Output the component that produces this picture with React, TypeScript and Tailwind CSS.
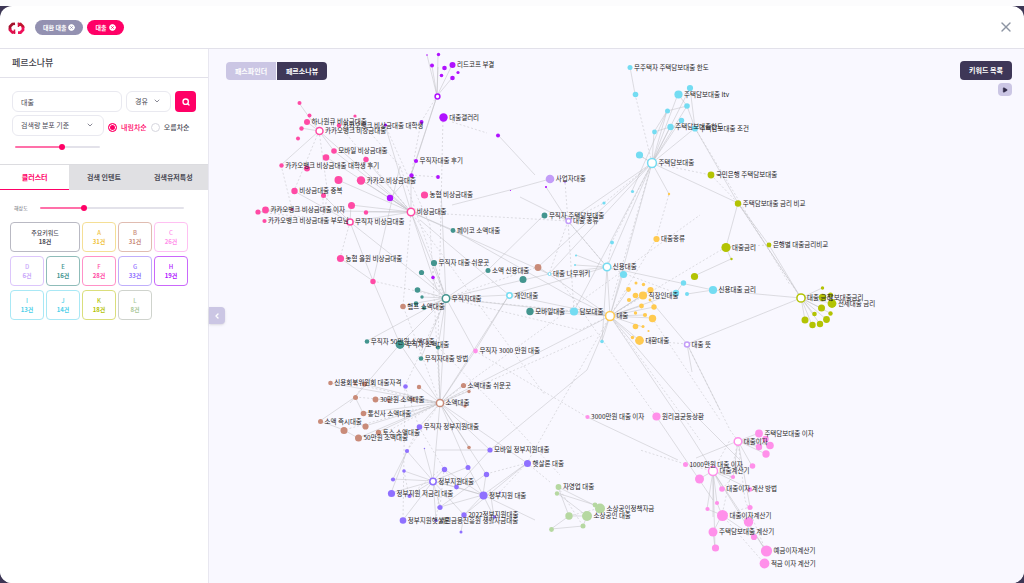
import { useState } from "react";
import { ChevronDown, ChevronLeft, CircleX, Play, Search, X } from "lucide-react";

type GraphNode = [x: number, y: number, r: number, label?: string, hub?: boolean];

interface Cluster {
  id: string;
  color: string;
  nodes: GraphNode[];
}

const clusters: Cluster[] = [
  {
    id: "F",
    color: "#ff4aa5",
    nodes: [
      [299.5, 103, 2], [309.5, 115.5, 2], [307, 122, 3, "하나원큐 비상금대출"],
      [339, 125.5, 2.2, "카카오뱅크 비상금대출 대학생"], [355, 116, 1.6], [301.5, 128.5, 2.2],
      [319.5, 131, 4, "카카오뱅크 비상금대출", true], [298, 138.5, 2], [334, 151, 2.8, "모바일 비상금대출"],
      [326, 157.5, 3.3], [366, 159.5, 2.7], [281.5, 165.5, 2.2, "카카오뱅크 비상금대출 대학생 후기"],
      [307, 168.5, 3], [338.5, 180, 4], [361, 180.5, 4.2, "카카오 비상금대출"],
      [294.5, 191, 3.2, "비상금대출 중복"], [323.5, 195.5, 2.5], [424.5, 195, 3.6, "농협 비상금대출"],
      [351.5, 205.5, 3.5], [265.5, 210, 3.4, "카카오뱅크 비상금대출 이자"], [258, 212, 2.6],
      [292, 209.5, 1.4], [366, 212.5, 2.2], [264.5, 221, 2.1, "카카오뱅크 비상금대출 부모님"],
      [350, 222, 3.6, "무직자 비상금대출", true], [411, 212, 4.2, "비상금대출", true],
      [340.5, 258.5, 3.6, "농협 올원 비상금대출"], [373, 281.5, 2.7],
    ],
  },
  {
    id: "H",
    color: "#b012ff",
    nodes: [
      [427, 55, 0.8], [438.5, 54.5, 1.7], [432, 65.5, 2], [444.5, 68, 2.3], [452.5, 65, 3, "리드코프 부결"],
      [458, 72.5, 1.6], [441.5, 75.5, 1.8], [452.5, 78, 2.3], [437.5, 96.5, 2.9, "", true],
      [443.5, 117.5, 4.2, "대출갤러리"], [421.5, 122, 2], [385.5, 125, 1.6], [498, 135.5, 2],
      [416, 161, 2.1, "무직자대출 후기"], [411.5, 175.5, 2.2], [438, 177, 1.9], [390, 198, 3.2],
      [433, 277.5, 1.8], [546, 187, 1.1], [510.5, 190.5, 0.6],
    ],
  },
  {
    id: "D",
    color: "#c39df8",
    nodes: [
      [550, 179, 4.3, "사업자대출"], [565, 182, 1.2], [568.5, 221, 3, "대출 종류", true],
      [687, 344.5, 3, "대출 뜻", true],
    ],
  },
  {
    id: "E",
    color: "#43958f",
    nodes: [
      [544.5, 215.5, 2.9, "무직자 주택담보대출"], [453, 230.5, 2.4, "페이코 소액대출"],
      [434, 263, 3.1, "무직자 대출 쉬운곳"], [421.5, 272.5, 2.6], [417.5, 290, 2.8], [422, 297, 1.7],
      [446, 298.5, 4.2, "무직자대출", true], [416, 303.5, 2.3], [424, 308, 2.1], [488, 270.5, 2.5, "소액 신용대출"],
      [523, 279.5, 3.5], [530, 311.5, 3.7, "모바일대출"], [367, 341.5, 2.3, "무직자 50만원 소액대출"],
      [400, 344.5, 4.4, "무직자 소액대출"], [438, 347.5, 2.1], [421, 358.5, 2.3, "무직자대출 방법"],
    ],
  },
  {
    id: "B",
    color: "#c98b79",
    nodes: [
      [403, 306.5, 2.8, "햄프 소액대출"], [538, 267.5, 3.4], [330.5, 383, 2.3, "신용회복위원회 대출자격"],
      [355, 384, 1.5], [364.5, 384, 2.5], [419, 387, 2.2], [463.5, 385.5, 2.6, "소액대출 쉬운곳"],
      [469, 391.5, 1.7], [440, 403, 4.1, "소액대출", true], [465, 406, 1.7], [355.5, 397.5, 2.5],
      [375.5, 399.5, 2.9, "30만원 소액대출"], [389, 400.5, 2.1], [413, 399.5, 2.1], [363.5, 413.5, 2.8, "통신사 소액대출"],
      [320.5, 421.5, 2.5, "소액 즉시대출"], [365.5, 426.5, 3.1], [344, 430.5, 3.5], [378.5, 432.5, 2.7, "토스 소액대출"],
      [358.5, 438, 3.5, "50만원 소액대출"], [469, 447.5, 1.8],
    ],
  },
  {
    id: "G",
    color: "#8f70ff",
    nodes: [
      [405.5, 386.5, 2.3], [419.5, 427, 2.8, "무직자 정부지원대출"], [407, 451, 2.1], [424.5, 448.5, 0.7],
      [490, 450, 2.6, "모바일 정부지원대출"], [527.5, 463.5, 3.5, "햇살론 대출"], [404, 471, 1.8], [444.5, 469.5, 2.7],
      [468, 467.5, 2.5], [486.5, 474.5, 2.7], [393, 479.5, 2.1], [433, 481.5, 3.7, "정부지원대출", true],
      [456.5, 487, 2.4], [391.5, 493.5, 3.6, "정부지원 저금리 대출"], [409.5, 496, 2.1],
      [483.5, 495.5, 4, "정부지원 대출"], [500, 492.5, 1], [494.5, 517, 1.7], [440, 507.5, 2.6],
      [464, 515, 2.7, "2022정부지원대출"], [403, 520.5, 3.3, "정부지원햇살론"],
      [436, 520.5, 1.6, "서민금융진흥원 생활자금대출"], [461, 532, 1.5],
    ],
  },
  {
    id: "I",
    color: "#74dcf2",
    nodes: [
      [630, 67.5, 2.5, "무주택자 주택담보대출 한도"], [635.5, 94.5, 2.8], [678.5, 94.5, 4.1, "주택담보대출 ltv"],
      [690, 88, 3.1], [687, 106, 2.8], [667.5, 111, 2.5], [681.5, 120.5, 2.7], [670.5, 127, 3.2, "주택담보대출한도"],
      [695, 128.5, 3.1, "주택담보대출 조건"], [654.5, 132, 2.4], [639.5, 155, 3.6], [652, 163, 4.9, "주택담보대출", true],
      [632.5, 191.5, 1.6], [604, 203, 1.6], [612, 242.5, 1.9], [576, 255.5, 1], [575, 265, 1],
      [607, 267, 4.3, "신용대출", true], [549.5, 274, 2, "대출 나무위키", true], [509.5, 295.5, 3.2, "개인대출", true],
      [574, 311.5, 4.1, "담보대출"], [623.5, 274.5, 3.6], [602, 341.5, 1.8], [683.5, 283, 2.7], [676, 293, 3.2],
      [687, 294, 2], [713, 290, 4.1, "신용대출 금리"],
    ],
  },
  {
    id: "A",
    color: "#ffca50",
    nodes: [
      [669, 194, 1.2], [656.5, 239, 3.1, "대출종류"], [636, 283, 1.5], [643.5, 284.5, 1.7], [628.5, 289.5, 2.4],
      [650.5, 290, 3.1], [635.5, 295.5, 2.8], [643, 295.5, 4.1, "직장인대출"], [629, 300, 2.1], [650, 300, 1.4],
      [641.5, 306, 2.4], [654, 307, 2.7], [635.5, 313, 1.7], [645, 315, 2.1], [652.5, 318.5, 3.7], [635.5, 326.5, 2.8],
      [643, 326.5, 1.5], [648.5, 331, 1.1], [632.5, 337.5, 1.7], [639.5, 340.5, 4.4, "대환대출"],
      [610, 316, 4.9, "대출", true],
    ],
  },
  {
    id: "K",
    color: "#b3c303",
    nodes: [
      [711, 175, 3.4, "국민은행 주택담보대출"], [738, 203.5, 3.2, "주택담보대출 금리 비교"], [726, 247.5, 4.6, "대출금리"],
      [769, 245, 2.4, "은행별 대출금리비교"], [731.5, 259, 1.2], [694.5, 276.5, 3.6], [801, 298, 4.6, "대출 금리", true],
      [822.5, 288, 1.7], [822.5, 297.5, 3.7, "담보대출금리"], [830.5, 295, 2.5], [832, 303.5, 4.4, "전세대출 금리"],
      [821.5, 308, 3.5], [814.5, 314, 2.3], [830.5, 313.5, 2.2], [805, 320, 3.5], [812.5, 325, 3.2], [820, 324, 3.2],
      [826.5, 319.5, 3.4],
    ],
  },
  {
    id: "C",
    color: "#ff90ea",
    nodes: [
      [475.5, 351, 2.4, "무직자 3000 만원 대출"], [587.5, 417, 2.1, "3000만원 대출 이자"], [656.5, 416.5, 4.1, "원리금균등상환"],
      [685.5, 464.5, 2.5, "1000만원 대출 이자"], [738, 441.5, 4.3, "대출이자", true], [759, 433.5, 3.9, "주택담보대출 이자"],
      [765.5, 439, 3.2], [770, 445.5, 3.8], [759, 447, 3.2], [766, 454, 3.7], [752.5, 466, 2.8], [733, 477, 2.1],
      [713, 471, 5, "대출계산기", true], [699.5, 479, 4.5], [722, 489, 2.8, "대출이자 계산 방법"], [750, 489.5, 2.3],
      [717, 503, 2.1], [707.5, 509, 2.1], [722.5, 515.5, 5.5, "대출이자계산기"], [750, 507.5, 2.6], [748.5, 522, 4.7],
      [713, 532, 4.5, "주택담보대출 계산기"], [754, 537, 3.1], [715.5, 548, 3.6], [766.5, 551, 5.6, "예금이자계산기"],
      [764.5, 563.5, 4.9, "적금 이자 계산기"],
    ],
  },
  {
    id: "L",
    color: "#b6d8a1",
    nodes: [
      [558.5, 487, 2.9, "자영업 대출"], [557, 493.5, 2.2], [569, 516, 3.7], [587, 516, 5, "소상공인 대출"],
      [595, 505, 2.4], [600, 508.5, 5, "소상공인정책자금"], [583, 526, 2.5], [551.5, 529.5, 2.4],
    ],
  },
];

const solidEdges = [
  // 대출갤러리
  "M437 96L432 66M437 96L427 55M437 96L438 55M437 96L438 67M437 96L452 78M437 96L452 65",
  "M437 96L416 161L411 175M437 96L411 175L390 198M498 135L535 175",
  // 비상금대출
  "M411 212L366 160M411 212L334 151M411 212L326 157M411 212L361 180M411 212L338 180M411 212L351 205",
  "M411 212L366 212M411 212L350 222M411 212L319 131M411 212L265 210M411 212L390 198M411 212L411 175",
  "M411 212L385 125M411 212L453 230M411 212L446 298M411 212L437 290M411 212L549 274",
  "M319 131L299 103M319 131L307 122M319 131L301 128M319 131L334 151M319 131L281 165",
  "M350 222L323 195M350 222L294 191M350 222L351 205M340 258L373 281L400 166M373 281L400 344",
  "M350 222L446 298M350 222L373 281M258 212L292 209",
  // 무직자대출
  "M446 298L434 263M446 298L421 272M446 298L417 290M446 298L422 297M446 298L416 303M446 298L424 308",
  "M446 298L488 270L544 215M446 298L509 295M446 298L523 280L549 274M446 298L610 316M446 298L438 347",
  "M446 298L400 344M446 298L421 358M446 298L440 403M446 298L367 341M446 298L475 351M441 190L446 298",
  "M453 230L568 295L610 316M400 344L350 403M400 344L440 403M438 347L440 403M475 351L440 403",
  // 대출
  "M610 316L574 311M610 316L530 311M610 316L549 274M610 316L607 267M610 316L623 274M610 316L602 341",
  "M610 316L628 290M610 316L643 295M610 316L650 290M610 316L654 307M610 316L652 318M610 316L643 327",
  "M610 316L639 340M610 316L632 337M610 316L645 315M610 316L641 306M610 316L676 293M610 316L440 403",
  "M610 316L587 370L490 450M610 316L687 430L713 471M610 316L690 410L740 460M610 316L652 163",
  "M602 341L607 267M610 316L509 295L420 220M607 267L549 274M607 267L652 163M607 267L713 290L801 298",
  "M607 267L568 221L520 197M607 267L509 295L440 403M607 267L575 265M607 267L576 255",
  "M568 221L652 163M568 221L546 187M549 274L538 267L652 163M549 274L652 163M574 311L652 163",
  "M452 205L510 190L550 179",
  // 주택담보대출
  "M652 163L690 88M652 163L678 94M652 163L687 106M652 163L667 111M652 163L681 120M652 163L670 127",
  "M652 163L695 128M652 163L654 132M652 163L639 155M654 132L670 127L695 128L687 106L678 94M654 132L667 111L687 106",
  "M630 67L635 94M690 88L695 128L738 203L801 298M652 163L669 194M652 163L738 203M667 111L632 191",
  "M738 203L769 245L801 298M738 203L726 247L731 259L694 276M676 293L683 283M687 294L713 290",
  "M801 298L687 344M687 344L650 300M687 344L692 372M687 344L720 410",
  "M801 298L822 288M801 298L830 295M801 298L832 303M801 298L821 308M801 298L814 314M801 298L830 313",
  "M801 298L805 320M801 298L812 325M801 298L820 324M801 298L826 319",
  // 소액대출
  "M440 403L330 383M440 403L364 384M440 403L375 399M440 403L363 413M440 403L365 426M440 403L378 432",
  "M440 403L358 438M440 403L463 385M440 403L469 391M440 403L465 406M440 403L419 387M440 403L419 427",
  "M440 403L469 447M440 403L490 450M440 403L527 463M440 403L433 481M440 403L468 467M440 403L486 474",
  "M355 397L320 421L344 430L358 438M355 397L363 413M436 450L490 450M509 295L475 351",
  // 정부지원대출
  "M433 481L444 469M433 481L468 467M433 481L407 451M433 481L404 471M433 481L393 479M433 481L391 493",
  "M433 481L409 496M433 481L403 520M433 481L440 507M433 481L456 487M433 481L483 495M433 481L464 515",
  "M433 481L436 520M433 481L424 448M483 495L486 474M483 495L468 467M483 495L527 463M483 495L500 492",
  "M483 495L464 515M483 495L494 517M483 495L456 487L490 450M444 469L483 495L535 520M464 515L527 463",
  "M440 507L483 495M461 532L464 515M407 451L391 493M407 451L393 479M440 507L486 474M494 517L490 490",
  // 대출이자
  "M738 441L759 433M738 441L765 439M738 441L770 445M738 441L759 447M738 441L766 454M738 441L752 466",
  "M738 441L733 477M738 441L750 507M738 441L696 458M656 416L713 500M587 417L678 460",
  "M713 471L699 479M713 471L733 477M713 471L750 489M713 471L722 489M713 471L717 503M713 471L707 509",
  "M713 471L713 517M713 471L754 537M713 471L766 551M713 471L715 548M722 515L754 537M713 532L715 548M722 515L713 532",
  "M717 503L722 515M707 509L722 515M748 522L766 551",
  // 소상공인
  "M558 487L569 516M557 493L587 516M558 487L600 508M557 493L595 505M569 516L587 516L583 526L551 529L569 516",
];

const dashedEdges = [
  "M437 96L421 122L411 175M443 117L438 347L440 403M452 122L487 133M411 175L438 177M411 212L568 221",
  "M319 131L294 191M319 131L328 195L323 215L323 195M350 222L340 258M281 165L292 209M258 212L350 222",
  "M411 212L403 306M339 125L411 212L545 395M355 116L400 166L446 298M385 125L430 225L440 403",
  "M446 298L538 267M446 298L574 311M440 403L403 306M446 298L405 386L403 520M434 263L433 277L446 298",
  "M373 281L446 298L580 330L610 316M440 403L594 335M440 403L700 215M438 347L500 410L560 475",
  "M568 221L565 182M568 221L607 267M568 221L574 311M568 221L549 274M607 267L612 242L652 163",
  "M635 94L652 163L612 300M652 163L604 203L568 221M639 155L652 163L711 175M711 175L738 203",
  "M695 128L790 285M656 239L669 194M610 316L726 247M610 316L656 239M607 267L676 293M738 203L801 298",
  "M726 247L769 245M687 344L639 340M652 318L720 420M687 344L730 430L738 441M610 316L700 440",
  "M475 351L587 417M656 416L560 280M685 464L640 450M685 464L713 471M610 316L540 440L527 463",
  "M527 463L486 474M527 463L500 492M527 463L550 482M405 386L419 427L407 451M419 427L444 469L440 507",
  "M390 430L440 403L389 400M440 403L355 384M440 403L344 430M364 384L355 397L389 400M440 403L407 451",
  "M738 441L722 515M738 441L745 500L766 551M722 489L733 477M722 515L764 563M713 471L730 440M722 515L750 507",
  "M558 487L583 526M569 516L600 508M436 520L440 490M409 496L440 470M444 469L456 487M404 471L409 496",
];

// Drawing units per stored coordinate step
const UNIT = 2;

function KeywordGraph() {
  return (
    <svg
      viewBox="418 98 1630 1068"
      className="block w-full font-['Noto_Sans_CJK_KR',sans-serif] text-[13px]"
      role="img"
      aria-label="키워드 네트워크"
    >
      <g transform={`scale(${UNIT})`} fill="none" stroke="#bfbec3" strokeWidth="0.5">
        <path d={solidEdges.join("")} />
        <path d={dashedEdges.join("")} strokeDasharray="2 2" />
      </g>
      {clusters.map((cluster) => (
        <g key={cluster.id}>
          {cluster.nodes.map(([x, y, r, , hub]) => (
            <circle
              key={`${x}-${y}`}
              cx={x * UNIT}
              cy={y * UNIT}
              r={(hub ? r - 0.5 : r) * UNIT}
              fill={hub ? "#ffffff" : cluster.color}
              stroke={hub ? cluster.color : "none"}
              strokeWidth={r > 2 ? 3 : 2}
            />
          ))}
        </g>
      ))}
      <g fill="#1d1c24">
        {clusters.flatMap((cluster) =>
          cluster.nodes
            .filter((node) => node[3])
            .map(([x, y, r, label]) => (
              <text key={`${x}-${y}`} x={(x + r + 1.5) * UNIT} y={y * UNIT + 4}>
                {label}
              </text>
            ))
        )}
      </g>
    </svg>
  );
}

const tiles = [
  { name: "주요키워드", count: "18건", style: "col-span-2 border-[#b9b9c3] text-[#4a4a55]" },
  { name: "A", count: "31건", style: "border-[#f5df96] text-[#efc23c]" },
  { name: "B", count: "31건", style: "border-[#e0bcb1] text-[#c98b79]" },
  { name: "C", count: "26건", style: "border-[#ffc0f2] text-[#ff90ea]" },
  { name: "D", count: "6건", style: "border-[#dcc6fb] text-[#c9a6fa]" },
  { name: "E", count: "16건", style: "border-[#8fbcb9] text-[#43958f]" },
  { name: "F", count: "28건", style: "border-[#ff91c8] text-[#ff4aa5]" },
  { name: "G", count: "33건", style: "border-[#c0aefb] text-[#8f70ff]" },
  { name: "H", count: "19건", style: "border-[#ca68fb] text-[#b012ff]" },
  { name: "I", count: "13건", style: "border-[#a9e8f5] text-[#4dcfe9]" },
  { name: "J", count: "14건", style: "border-[#a9e8f5] text-[#4dcfe9]" },
  { name: "K", count: "18건", style: "border-[#dade7c] text-[#b3c303]" },
  { name: "L", count: "8건", style: "border-[#cfd3cd] text-[#a9c79a]" },
];

const tabs = ["클러스터", "검색 인텐트", "검색유저특성"];

const sliderClass =
  "block h-0.5 appearance-none rounded-full [&::-webkit-slider-thumb]:size-1.5 [&::-webkit-slider-thumb]:appearance-none [&::-webkit-slider-thumb]:rounded-full [&::-webkit-slider-thumb]:bg-[#ff0066]";

function Logo() {
  return (
    <svg viewBox="0 0 34 26" className="mt-0.5 h-[13px] w-[17px]" fill="none" strokeWidth="5.500" role="img" aria-label="로고">
      <path d="M14 3.500L9 4L4 9V15" stroke="#a3122c" />
      <path d="M4 13V16L9 21L14 19.500" stroke="#e0104f" />
      <path d="M20 5.500L25 4L30 9V12" stroke="#c2132f" />
      <path d="M30 10V16L25 21H20" stroke="#f0105a" />
      <path d="M13 15V24M21 1V10" stroke="#d81145" strokeWidth="3" />
    </svg>
  );
}

function SelectBox({ label, value, className }: { label: string; value: string; className: string }) {
  return (
    <div className={`relative ${className}`}>
      <select
        aria-label={label}
        defaultValue={value}
        className="block h-[21px] w-full appearance-none rounded-md border border-[#e9e9f0] bg-white pl-2 text-[7px] text-[#4a4a55]"
      >
        <option>{value}</option>
      </select>
      <ChevronDown className="pointer-events-none absolute top-1.5 right-2.5 size-2 text-[#8a8a96]" strokeWidth={3} />
    </div>
  );
}

function Sidebar() {
  const [tab, setTab] = useState(tabs[0]);
  const [order, setOrder] = useState("내림차순");

  return (
    <aside className="w-[209px] shrink-0 border-r border-[#e8e7f0] bg-white">
      <h1 className="flex h-[29px] items-center border-b border-[#e2e1ea] px-3 text-[9px] font-medium text-[#3f3f4a]">
        페르소나뷰
      </h1>

      <form className="px-3 pt-[13px]" onSubmit={(e) => e.preventDefault()}>
        <div className="flex gap-1">
          <input
            aria-label="검색어"
            defaultValue="대출"
            className="h-[21px] w-[110px] rounded-md border border-[#e9e9f0] px-2 text-[7px] text-[#4a4a55]"
          />
          <SelectBox label="검색 방식" value="경유" className="w-[45px]" />
          <button aria-label="검색" className="flex size-[21px] items-center justify-center rounded bg-[#ff0066] text-white">
            <Search className="size-2" strokeWidth={4} />
          </button>
        </div>
        <div className="mt-[3px] flex items-center">
          <SelectBox label="정렬 기준" value="검색량 분포 기준" className="w-[92px]" />
          {["내림차순", "오름차순"].map((item) => (
            <label
              key={item}
              className="ml-1 flex items-center gap-1 pt-1 text-[7px] font-medium text-[#4a4a55] has-checked:text-[#ff0066]"
            >
              <input
                type="radio"
                name="order"
                checked={order === item}
                onChange={() => setOrder(item)}
                className="size-[9px] appearance-none rounded-full border border-[#d6d6de] bg-white checked:border-[#ff0066] checked:bg-[#ff0066] checked:shadow-[inset_0_0_0_1px_white]"
              />
              {item}
            </label>
          ))}
        </div>
        <div className="px-[3px] py-[10px]">
          <input
            type="range"
            aria-label="검색량 범위"
            defaultValue={56}
            className={`${sliderClass} w-[85px] bg-[linear-gradient(to_right,#ff70a9_56%,#e3e2ea_56%)]`}
          />
        </div>
      </form>

      <div role="tablist" className="mt-1.5 flex h-[26px]">
        {tabs.map((item) => (
          <button
            key={item}
            role="tab"
            aria-selected={tab === item}
            onClick={() => setTab(item)}
            className="flex-1 border-t border-[#dcdce0] bg-[#e0e0e3] text-[7px] font-bold text-[#4a4a55] aria-selected:border-b aria-selected:border-b-[#ff0066] aria-selected:bg-white aria-selected:text-[#ff0066]"
          >
            {item}
          </button>
        ))}
      </div>

      <label className="mt-3 flex h-3 items-center gap-3 pr-6 pl-3.5 text-[5px] text-[#6a6a75]">
        해상도
        <input
          type="range"
          defaultValue={30}
          className={`${sliderClass} min-w-0 flex-1 bg-[linear-gradient(to_right,#ff70a9_30%,#e3e2ea_30%)]`}
        />
      </label>

      <div className="mt-2 grid grid-cols-5 gap-x-0.5 gap-y-1 pr-5 pl-2.5">
        {tiles.map((tile) => (
          <button
            key={tile.name}
            className={`flex h-[30px] flex-col items-center justify-center rounded border bg-white text-[6px] leading-[9px] font-medium ${tile.style}`}
          >
            <span>{tile.name}</span>
            <span className="font-bold">{tile.count}</span>
          </button>
        ))}
      </div>
    </aside>
  );
}

export default function App() {
  return (
    <div className="min-h-screen bg-[#fcfcfd] pt-1.5 font-['Noto_Sans_CJK_KR',sans-serif]">
      <div className="bg-[#3c3654]">
        <div className="overflow-hidden rounded-xl bg-white">
          <header className="flex h-[43px] items-center border-b border-[#e2e1ea] pr-2.5 pl-2">
            <Logo />
            <div className="ml-2.5 flex gap-1">
              <button className="flex h-[15px] items-center gap-0.5 rounded-full bg-[#9391b1] px-2 text-[6px] font-bold text-white">
                대환 대출
                <CircleX className="size-[7px] fill-white text-white [&>path]:stroke-[#9391b1]" strokeWidth={3} />
              </button>
              <button className="flex h-[15px] items-center gap-0.5 rounded-full bg-[#ff0066] px-2 text-[6px] font-bold text-white">
                대출
                <CircleX className="size-[7px] fill-white text-white [&>path]:stroke-[#ff0066]" strokeWidth={3} />
              </button>
            </div>
            <button aria-label="닫기" className="ml-auto text-[#8d95a3]">
              <X className="size-4" strokeWidth={2} />
            </button>
          </header>

          <div className="flex">
            <Sidebar />
            <main className="relative min-w-0 flex-1 bg-[#f9f8ff]">
              <KeywordGraph />

              <div className="absolute top-[13px] left-[17px] flex gap-px text-[7px] font-bold text-white">
                <button className="h-[18px] w-[50px] rounded-l bg-[#cbc6e4]">패스파인더</button>
                <button className="h-[18px] w-[50px] rounded-r bg-[#3e3757]">페르소나뷰</button>
              </div>

              <div className="absolute top-3 right-3 flex flex-col items-end gap-[3px]">
                <button className="h-[19px] w-[52px] rounded bg-[#3e3757] text-[7px] font-bold text-white">키워드 목록</button>
                <button
                  aria-label="재생"
                  className="flex h-[13px] w-3.5 items-center justify-center rounded bg-[#cbc6e4] text-[#2f2946]"
                >
                  <Play className="size-1.5 fill-current" />
                </button>
              </div>

              <button
                aria-label="사이드바 접기"
                className="absolute top-[258px] left-0 flex h-[17px] w-4 items-center justify-center rounded-r bg-[#cbc6e4] text-white shadow-sm"
              >
                <ChevronLeft className="size-2" strokeWidth={4} />
              </button>
            </main>
          </div>
        </div>
      </div>
    </div>
  );
}
